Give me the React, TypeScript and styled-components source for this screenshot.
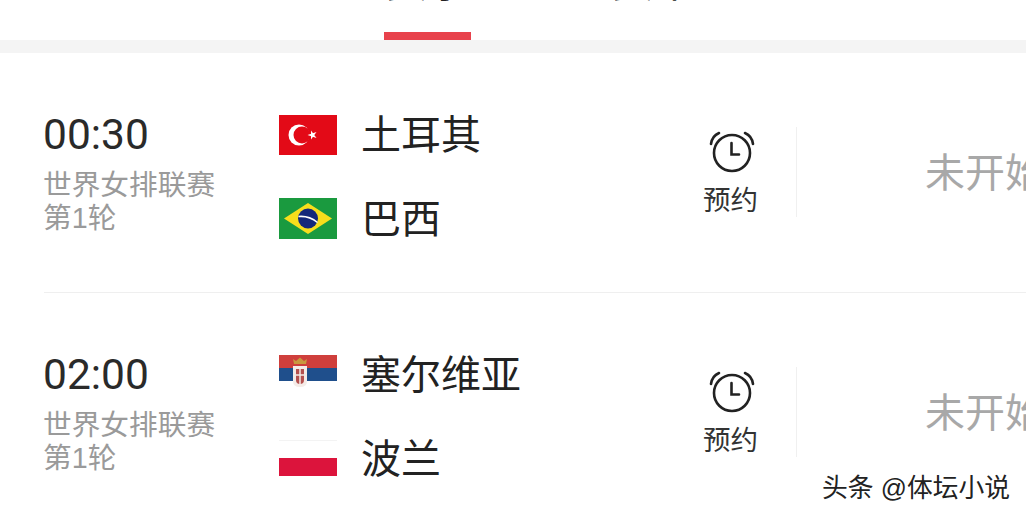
import React from 'react';
import styled, { createGlobalStyle } from 'styled-components';

const Global = createGlobalStyle`
  html, body { margin: 0; padding: 0; background: #fff; width: 1026px; height: 516px; overflow: hidden; }
  body { font-family: "Liberation Sans", "Noto Sans CJK SC", sans-serif; }
`;
const Page = styled.div`
  position: relative; width: 1026px; height: 516px; overflow: hidden; background: #fff;
`;
const Tabs = styled.div`
  height: 40px; position: relative; display: flex; overflow: hidden;
`;
const Tab = styled.div<{ $active?: boolean; $w: number; $ml: number }>`
  margin-left: ${p => p.$ml}px; width: ${p => p.$w}px; height: 40px; position: relative;
  font-size: 42px; line-height: 42px; color: #222; white-space: nowrap;
  &::after { content: ''; display: ${p => (p.$active ? 'block' : 'none')}; position: absolute; left: 0; right: 0; bottom: 0; height: 8px; background: #e8424c; }
`;
const TabText = styled.span`
  position: absolute; top: -38px; left: 50%; transform: translateX(-50%);
`;
const Band = styled.div` height: 13px; background: #f4f4f4; `;
const Row = styled.div`
  display: flex; align-items: flex-start; height: 239px; margin-left: 44px; box-sizing: border-box;
  & + & { border-top: 1px solid #efefef; }
`;
const TimeCol = styled.div`
  width: 235px; padding-top: 59px; flex: none;
`;
const Time = styled.div` font-family: Roboto, sans-serif; font-size: 42.5px; line-height: 46px; color: #2a2a2a; margin-left: -1px; `;
const Comp = styled.div` font-size: 28.7px; line-height: 33px; color: #9a9a9a; margin-top: 11px; margin-left: -1px; `;
const Teams = styled.div`
  width: 380px; flex: none; padding-top: 60px; display: flex; flex-direction: column; gap: 40px;
`;
const Team = styled.div`
  display: flex; align-items: center; gap: 24px; height: 44px; font-size: 40px; color: #222;
`;
const TeamName = styled.span` padding-bottom: 7px; `;
const Flag = styled.svg` width: 58px; height: 40px; flex: none; display: block; overflow: visible; `;
const Alarm = styled.div`
  width: 128px; flex: none; margin-left: 9px; padding-top: 76px; display: flex; flex-direction: column; align-items: center; gap: 10px;
  font-size: 27.5px; line-height: 36px; color: #333;
`;
const AlarmLabel = styled.span` margin-right: 3px; `;
const Status = styled.div`
  margin-top: 74px; height: 90px; border-left: 1px solid #f0f0f0; padding-left: 128px; flex: none; white-space: nowrap;
  font-size: 40px; line-height: 92px; color: #a8a8a8;
`;
const Mark = styled.div`
  position: absolute; left: 822px; top: 472px; font-size: 25.8px; line-height: 32px; color: #222; white-space: nowrap;
  text-shadow: 1px 1px 0 #fff, -1px -1px 0 #fff;
`;

const Turkey = () => (
  <Flag viewBox="0 0 58 40">
    <rect width="58" height="40" fill="#e30a17" />
    <circle cx="20" cy="20" r="10.5" fill="#fff" />
    <circle cx="23" cy="20" r="8.5" fill="#e30a17" />
    <polygon points="28.5,20 37.5,17 32,24.5 32,15.5 37.5,23" fill="#fff" />
  </Flag>
);
const Brazil = () => (
  <Flag viewBox="0 0 58 40">
    <rect y="-1" width="58" height="41" fill="#1a9a3f" />
    <polygon points="29,4 53,19.5 29,35 5,19.5" fill="#f7de1c" />
    <circle cx="29" cy="19.5" r="10" fill="#14287a" />
    <path d="M19.5 17.5 Q30 16.5 38.5 23.5" stroke="#fff" strokeWidth="1.5" fill="none" />
  </Flag>
);
const Serbia = () => (
  <Flag viewBox="0 0 58 40">
    <rect width="58" height="13" fill="#cf3f3c" />
    <rect y="13" width="58" height="13" fill="#1f4f8c" />
    <path d="M15 9 L14 4 L17 6 L21 2.5 L25 6 L28 4 L27 9z" fill="#c9983f" />
    <path d="M14 11 h14 v15 q0 6 -7 6 q-7 0 -7 -6z" fill="#f4ece8" />
    <path d="M17 14 h8 v11 q0 4 -4 4 q-4 0 -4 -4z" fill="#b5514f" />
    <path d="M21 14 v15 M17 20 h8" stroke="#f4ece8" strokeWidth="1.5" />
  </Flag>
);
const Poland = () => (
  <Flag viewBox="0 0 58 40">
    <rect y="1" width="58" height="1" fill="#f3f3f3" />
    <rect y="19" width="58" height="18" fill="#dc143c" />
  </Flag>
);
const Clock = () => (
  <svg width="46" height="44" viewBox="0 0 46 44" fill="none" stroke="#222" strokeWidth="2.6" strokeLinecap="round">
    <circle cx="23" cy="24" r="18" />
    <path d="M22.5 14 V25.5 H30" />
    <path d="M2 15 Q3 7 10 4" />
    <path d="M44 15 Q43 7 36 4" />
  </svg>
);

const matches = [
  { time: '00:30', a: '土耳其', b: '巴西', A: Turkey, B: Brazil },
  { time: '02:00', a: '塞尔维亚', b: '波兰', A: Serbia, B: Poland },
];

export default function App() {
  return (
    <Page>
      <Global />
      <Tabs>
        <Tab $active $ml={384} $w={87}><TabText>赛事</TabText></Tab>
        <Tab $ml={139} $w={87}><TabText>赛果</TabText></Tab>
      </Tabs>
      <Band />
      {matches.map(m => (
        <Row key={m.time}>
          <TimeCol>
            <Time>{m.time}</Time>
            <Comp>世界女排联赛<br />第1轮</Comp>
          </TimeCol>
          <Teams>
            <Team><m.A /><TeamName>{m.a}</TeamName></Team>
            <Team><m.B /><TeamName>{m.b}</TeamName></Team>
          </Teams>
          <Alarm><Clock /><AlarmLabel>预约</AlarmLabel></Alarm>
          <Status>未开始</Status>
        </Row>
      ))}
      <Mark>头条 @体坛小说</Mark>
    </Page>
  );
}
